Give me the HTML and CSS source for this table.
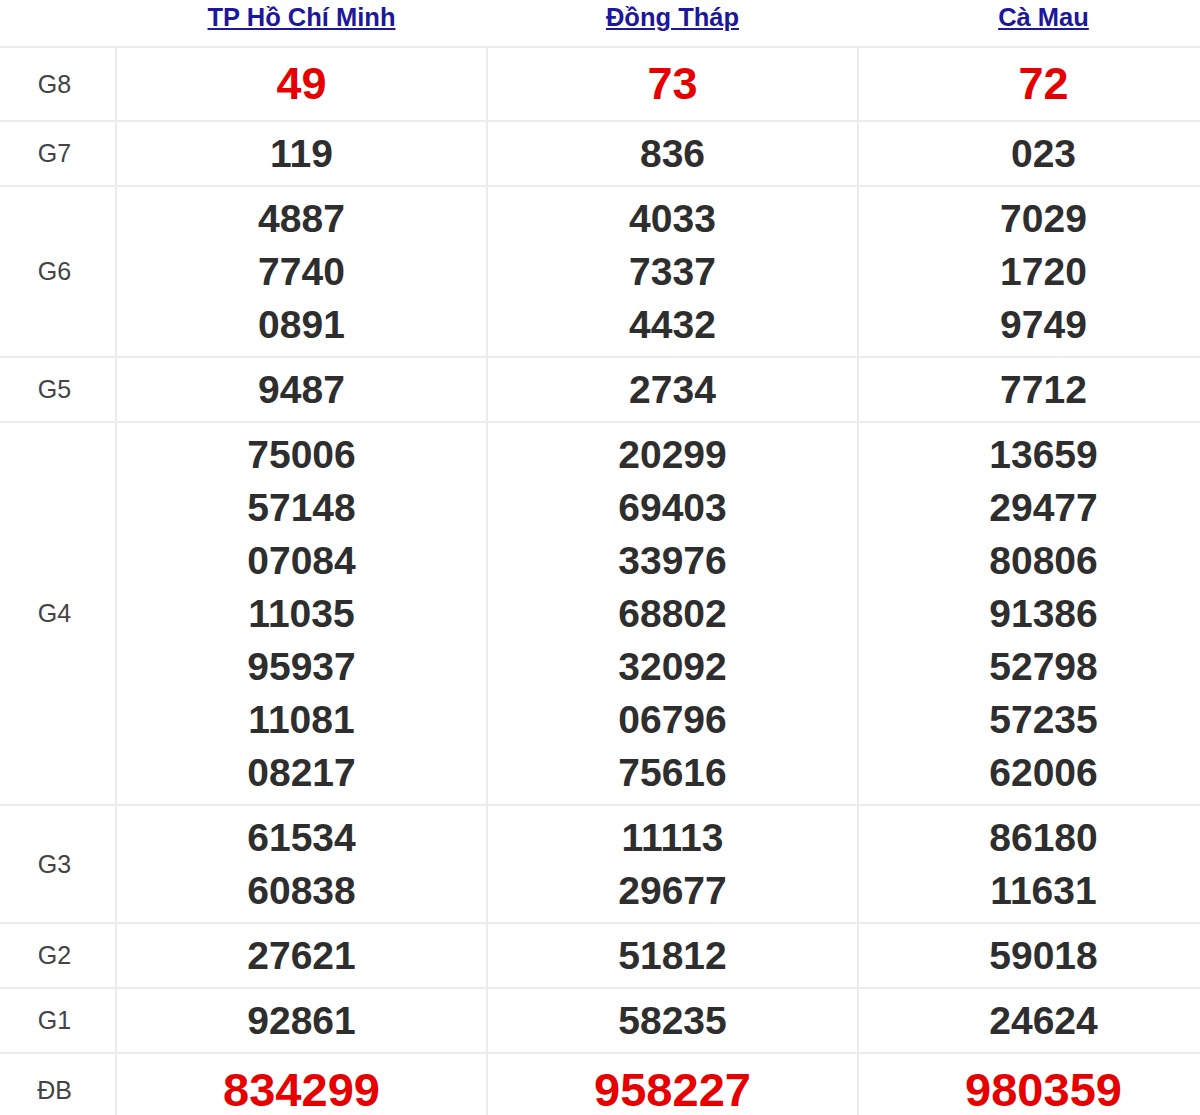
FILE: index.html
```html
<!DOCTYPE html>
<html lang="vi">
<head>
<meta charset="utf-8">
<title>Kết quả xổ số</title>
<link rel="stylesheet" href="styles.css">
</head>
<body>
<table class="kq">
  <colgroup>
    <col class="c-label">
    <col class="c-prov">
    <col class="c-prov">
    <col class="c-prov">
  </colgroup>
  <thead>
    <tr class="head">
      <th></th>
      <th><a href="#">TP Hồ Chí Minh</a></th>
      <th><a href="#">Đồng Tháp</a></th>
      <th><a href="#">Cà Mau</a></th>
    </tr>
  </thead>
  <tbody>
    <tr class="big">
      <td class="lbl">G8</td>
      <td class="red">49</td>
      <td class="red">73</td>
      <td class="red">72</td>
    </tr>
    <tr>
      <td class="lbl">G7</td>
      <td>119</td>
      <td>836</td>
      <td>023</td>
    </tr>
    <tr>
      <td class="lbl">G6</td>
      <td><div>4887</div><div>7740</div><div>0891</div></td>
      <td><div>4033</div><div>7337</div><div>4432</div></td>
      <td><div>7029</div><div>1720</div><div>9749</div></td>
    </tr>
    <tr>
      <td class="lbl">G5</td>
      <td>9487</td>
      <td>2734</td>
      <td>7712</td>
    </tr>
    <tr>
      <td class="lbl">G4</td>
      <td><div>75006</div><div>57148</div><div>07084</div><div>11035</div><div>95937</div><div>11081</div><div>08217</div></td>
      <td><div>20299</div><div>69403</div><div>33976</div><div>68802</div><div>32092</div><div>06796</div><div>75616</div></td>
      <td><div>13659</div><div>29477</div><div>80806</div><div>91386</div><div>52798</div><div>57235</div><div>62006</div></td>
    </tr>
    <tr>
      <td class="lbl">G3</td>
      <td><div>61534</div><div>60838</div></td>
      <td><div>11113</div><div>29677</div></td>
      <td><div>86180</div><div>11631</div></td>
    </tr>
    <tr>
      <td class="lbl">G2</td>
      <td>27621</td>
      <td>51812</td>
      <td>59018</td>
    </tr>
    <tr>
      <td class="lbl">G1</td>
      <td>92861</td>
      <td>58235</td>
      <td>24624</td>
    </tr>
    <tr class="db">
      <td class="lbl">ĐB</td>
      <td class="red">834299</td>
      <td class="red">958227</td>
      <td class="red">980359</td>
    </tr>
  </tbody>
</table>
</body>
</html>
```
FILE: styles.css
```css
html, body {
  margin: 0;
  padding: 0;
  background: #fff;
  overflow: hidden;
}

.kq {
  border-collapse: collapse;
  table-layout: fixed;
  width: 1229px;
  font-family: "Liberation Sans", Arial, sans-serif;
  color: #333;
}

.c-label { width: 116px; }
.c-prov { width: 371px; }

.kq th {
  height: 46px;
  padding: 0;
  vertical-align: top;
  line-height: 34px;
  font-size: 25.5px;
  font-weight: bold;
  text-align: center;
  border: none;
  border-bottom: 2px solid #ececec;
}

.kq th a {
  color: #1d179b;
  text-decoration: underline;
}

.kq td {
  padding: 5px 0;
  text-align: center;
  vertical-align: middle;
  border: 2px solid #ececec;
  font-size: 39px;
  font-weight: bold;
  line-height: 53px;
  color: #2e2e2e;
}

.kq tr td:first-child { border-left: none; }

.kq td.lbl {
  font-size: 25px;
  font-weight: normal;
  color: #444;
  padding-right: 6px;
}

.kq tr.big td,
.kq tr.db td {
  line-height: 62px;
}

.kq tr.big td.red { font-size: 45px; }
.kq tr.db td.red { font-size: 47px; }
.kq tr.db td { border-bottom: none; }

.kq td.red { color: #e60000; }
```
